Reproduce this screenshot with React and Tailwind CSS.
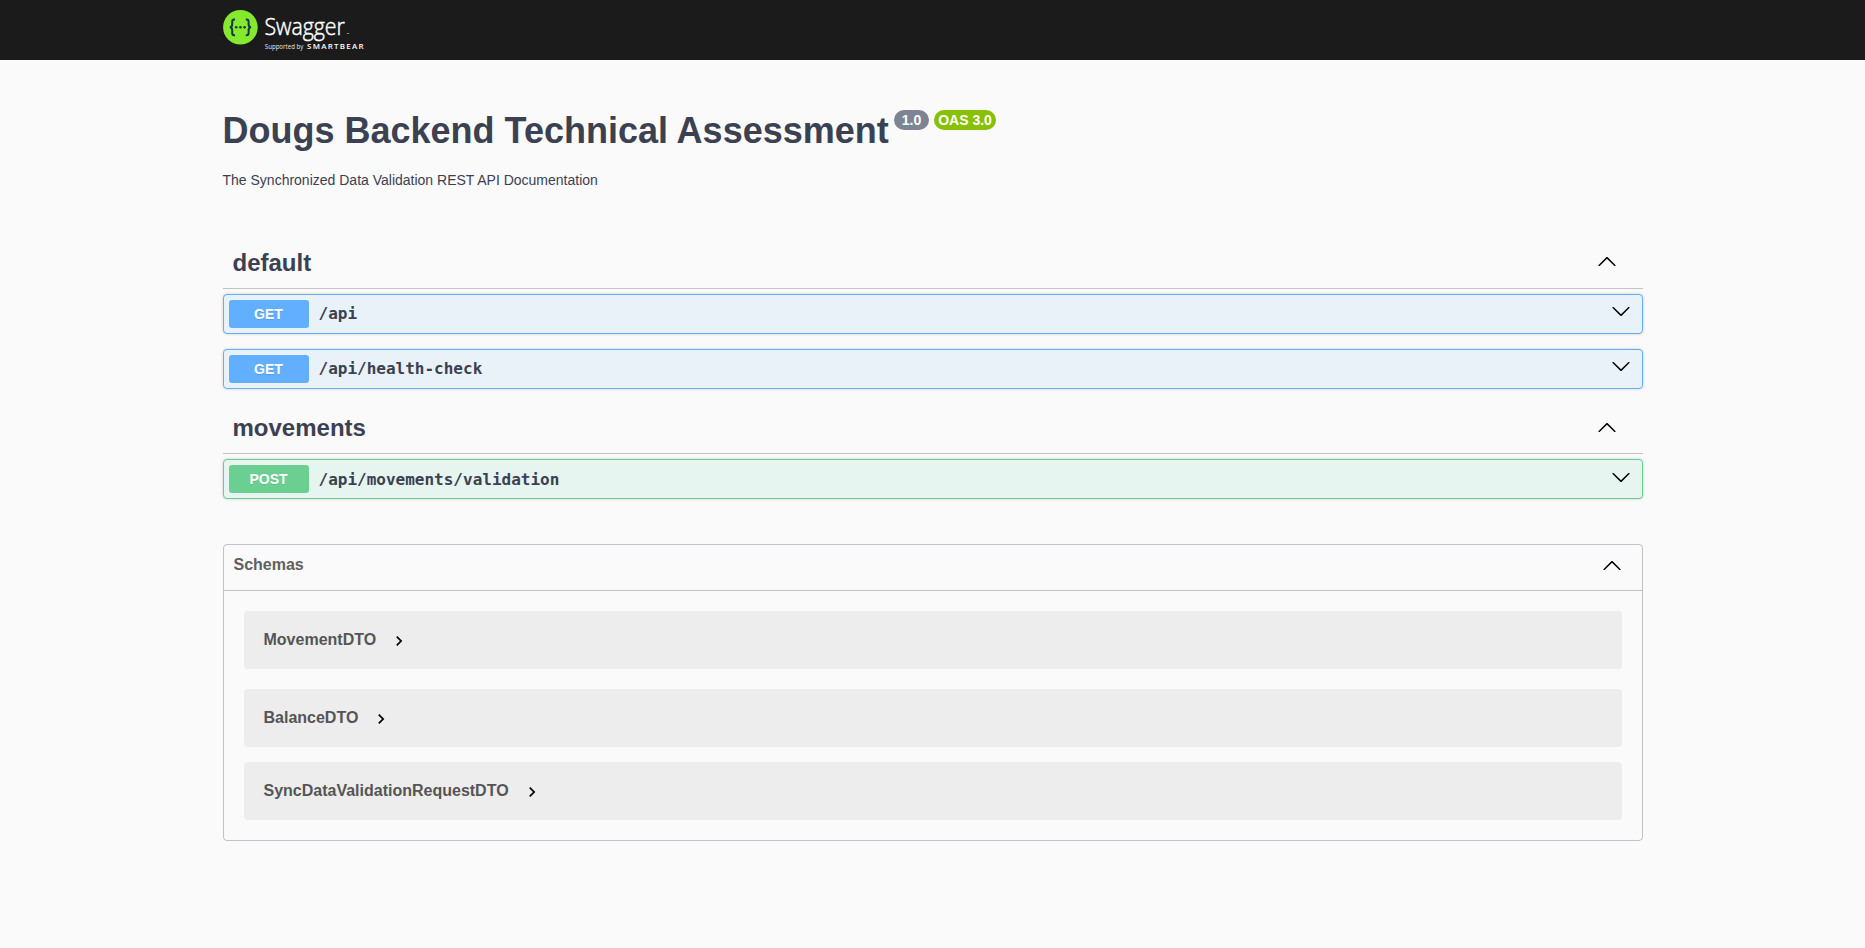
const ARROW_UP =
  'M17.418 14.908c.272.268.709.268.979 0s.271-.701 0-.969l-7.908-7.83c-.27-.268-.707-.268-.979 0l-7.908 7.83c-.27.268-.27.701 0 .969.271.268.709.268.979 0L10 7.767l7.418 7.141z';
const ARROW_DOWN =
  'M17.418 6.109c.272-.268.709-.268.979 0s.271.701 0 .969l-7.908 7.83c-.27.268-.707.268-.979 0l-7.908-7.83c-.27-.268-.27-.701 0-.969.271-.268.709-.268.979 0L10 13.25l7.418-7.141z';

function Arrow({ d, className = '' }) {
  return (
    <svg viewBox="0 0 20 20" className={`h-5 w-5 shrink-0 fill-black ${className}`}>
      <path d={d} />
    </svg>
  );
}

function Logo() {
  return (
    <svg width="145" height="60" viewBox="0 0 145 60" className="block">
      <circle cx="17.4" cy="27.3" r="17.3" fill="#85ea2d" />
      <g fill="none" stroke="#173647" strokeWidth="2">
        <path d="M12 19.4h-.8q-2 0-2 2.2v2.7q0 3-2.5 3 2.5 0 2.5 3v2.7q0 2.2 2 2.2h.8" />
        <path d="M22.8 19.4h.8q2 0 2 2.2v2.7q0 3 2.5 3-2.5 0-2.5 3v2.7q0 2.2-2 2.2h-.8" />
      </g>
      <g fill="#173647">
        <circle cx="13.2" cy="27.3" r="1.3" />
        <circle cx="17.4" cy="27.3" r="1.3" />
        <circle cx="21.6" cy="27.3" r="1.3" />
      </g>
      <g fill="#fff" fontFamily="'Open Sans', sans-serif">
        <text x="41.4" y="34.6" fontSize="23" fontWeight="300" stroke="#fff" strokeWidth="0.45" textLength="80.5" lengthAdjust="spacingAndGlyphs">Swagger</text>
        <rect x="123.8" y="33.2" width="2.4" height="0.8" opacity="0.6" />
        <text x="41.8" y="48.6" fontSize="6.3" textLength="38.5" lengthAdjust="spacingAndGlyphs" opacity="0.9">Supported by</text>
        <text x="84" y="48.5" fontSize="7.9" fontWeight="600" textLength="56.6" lengthAdjust="spacing">SMARTBEAR</text>
      </g>
    </svg>
  );
}

const METHODS = {
  GET: { box: 'border-[#61affe] bg-[#eaf2f9]', badge: 'bg-[#61affe]' },
  POST: { box: 'border-[#66ce92] bg-[#e6f5f0]', badge: 'bg-[#6bcf92]' },
};

function Operation({ method, path }) {
  const { box, badge } = METHODS[method];
  const nudge = method === 'POST';
  return (
    <div className={`flex h-10 items-start rounded border p-[5px] pr-[11px] shadow-[0_0_3px_rgba(0,0,0,0.19)] ${box}`}>
      <span className={`h-7 w-20 rounded-[3px] text-center text-sm leading-7 font-bold text-white [text-shadow:0_1px_0_rgba(0,0,0,0.1)] ${badge}`}>
        {method}
      </span>
      <span className={`flex-1 px-[10px] font-['DejaVu_Sans_Mono',monospace] text-base font-semibold ${nudge ? 'leading-[30px]' : 'leading-7'}`}>
        {path}
      </span>
      <Arrow d={ARROW_DOWN} className={nudge ? 'mt-0.5' : 'mt-px'} />
    </div>
  );
}

function TagSection({ name, operations, arrowClass }) {
  return (
    <section>
      <h3 className="mb-[5px] flex h-[54px] items-start justify-between border-b border-[#3b4151]/30 pr-[26px] pl-[10px] text-2xl leading-[55px] font-bold">
        {name}
        <Arrow d={ARROW_UP} className={arrowClass} />
      </h3>
      <div className="flex flex-col gap-[15px]">
        {operations.map((op) => (
          <Operation key={op.path} {...op} />
        ))}
      </div>
    </section>
  );
}

function Model({ name }) {
  return (
    <div className="flex h-[58px] items-center gap-[13px] rounded bg-[#ededed] px-5 text-base font-bold text-[#555]">
      {name}
      <svg viewBox="0 0 24 24" className="mt-0.5 h-5 w-5 fill-black">
        <path d="M10 6L8.59 7.41 13.17 12l-4.58 4.59L10 18l6-6z" />
      </svg>
    </div>
  );
}

export default function App() {
  return (
    <div className="min-h-screen bg-[#fafafa] font-['Liberation_Sans',sans-serif] text-[#3b4151]">
      <header className="h-[60px] bg-[#1b1b1b]">
        <div className="mx-auto max-w-[1460px] px-5">
          <Logo />
        </div>
      </header>
      <main className="mx-auto max-w-[1460px] px-5 pt-[50px]">
        <div className="flex items-start gap-[5px]">
          <h1 className="text-4xl leading-[41px] font-bold">Dougs Backend Technical Assessment</h1>
          <span className="h-5 rounded-full bg-[#7d8492] px-2 text-sm leading-5 font-bold text-white">1.0</span>
          <span className="h-5 rounded-full bg-[#89bf04] px-1 text-sm leading-5 font-bold text-white">OAS 3.0</span>
        </div>
        <p className="mt-[19px] text-sm">The Synchronized Data Validation REST API Documentation</p>

        <div className="mt-[45px] flex flex-col gap-[11px]">
          <TagSection
            name="default"
            arrowClass="mt-4"
            operations={[
              { method: 'GET', path: '/api' },
              { method: 'GET', path: '/api/health-check' },
            ]}
          />
          <TagSection
            name="movements"
            arrowClass="mt-[17px]"
            operations={[{ method: 'POST', path: '/api/movements/validation' }]}
          />
        </div>

        <section className="mt-[45px] rounded border border-[#3b4151]/30">
          <h4 className="flex h-[46px] items-start justify-between border-b border-[#3b4151]/30 pt-[10px] pr-[20px] pl-[10px] text-base leading-5 font-bold text-[#606060]">
            Schemas
            <Arrow d={ARROW_UP} />
          </h4>
          <div className="px-5 pt-5 pb-5">
            <Model name="MovementDTO" />
            <div className="mt-5 mb-[15px]">
              <Model name="BalanceDTO" />
            </div>
            <Model name="SyncDataValidationRequestDTO" />
          </div>
        </section>
      </main>
    </div>
  );
}
